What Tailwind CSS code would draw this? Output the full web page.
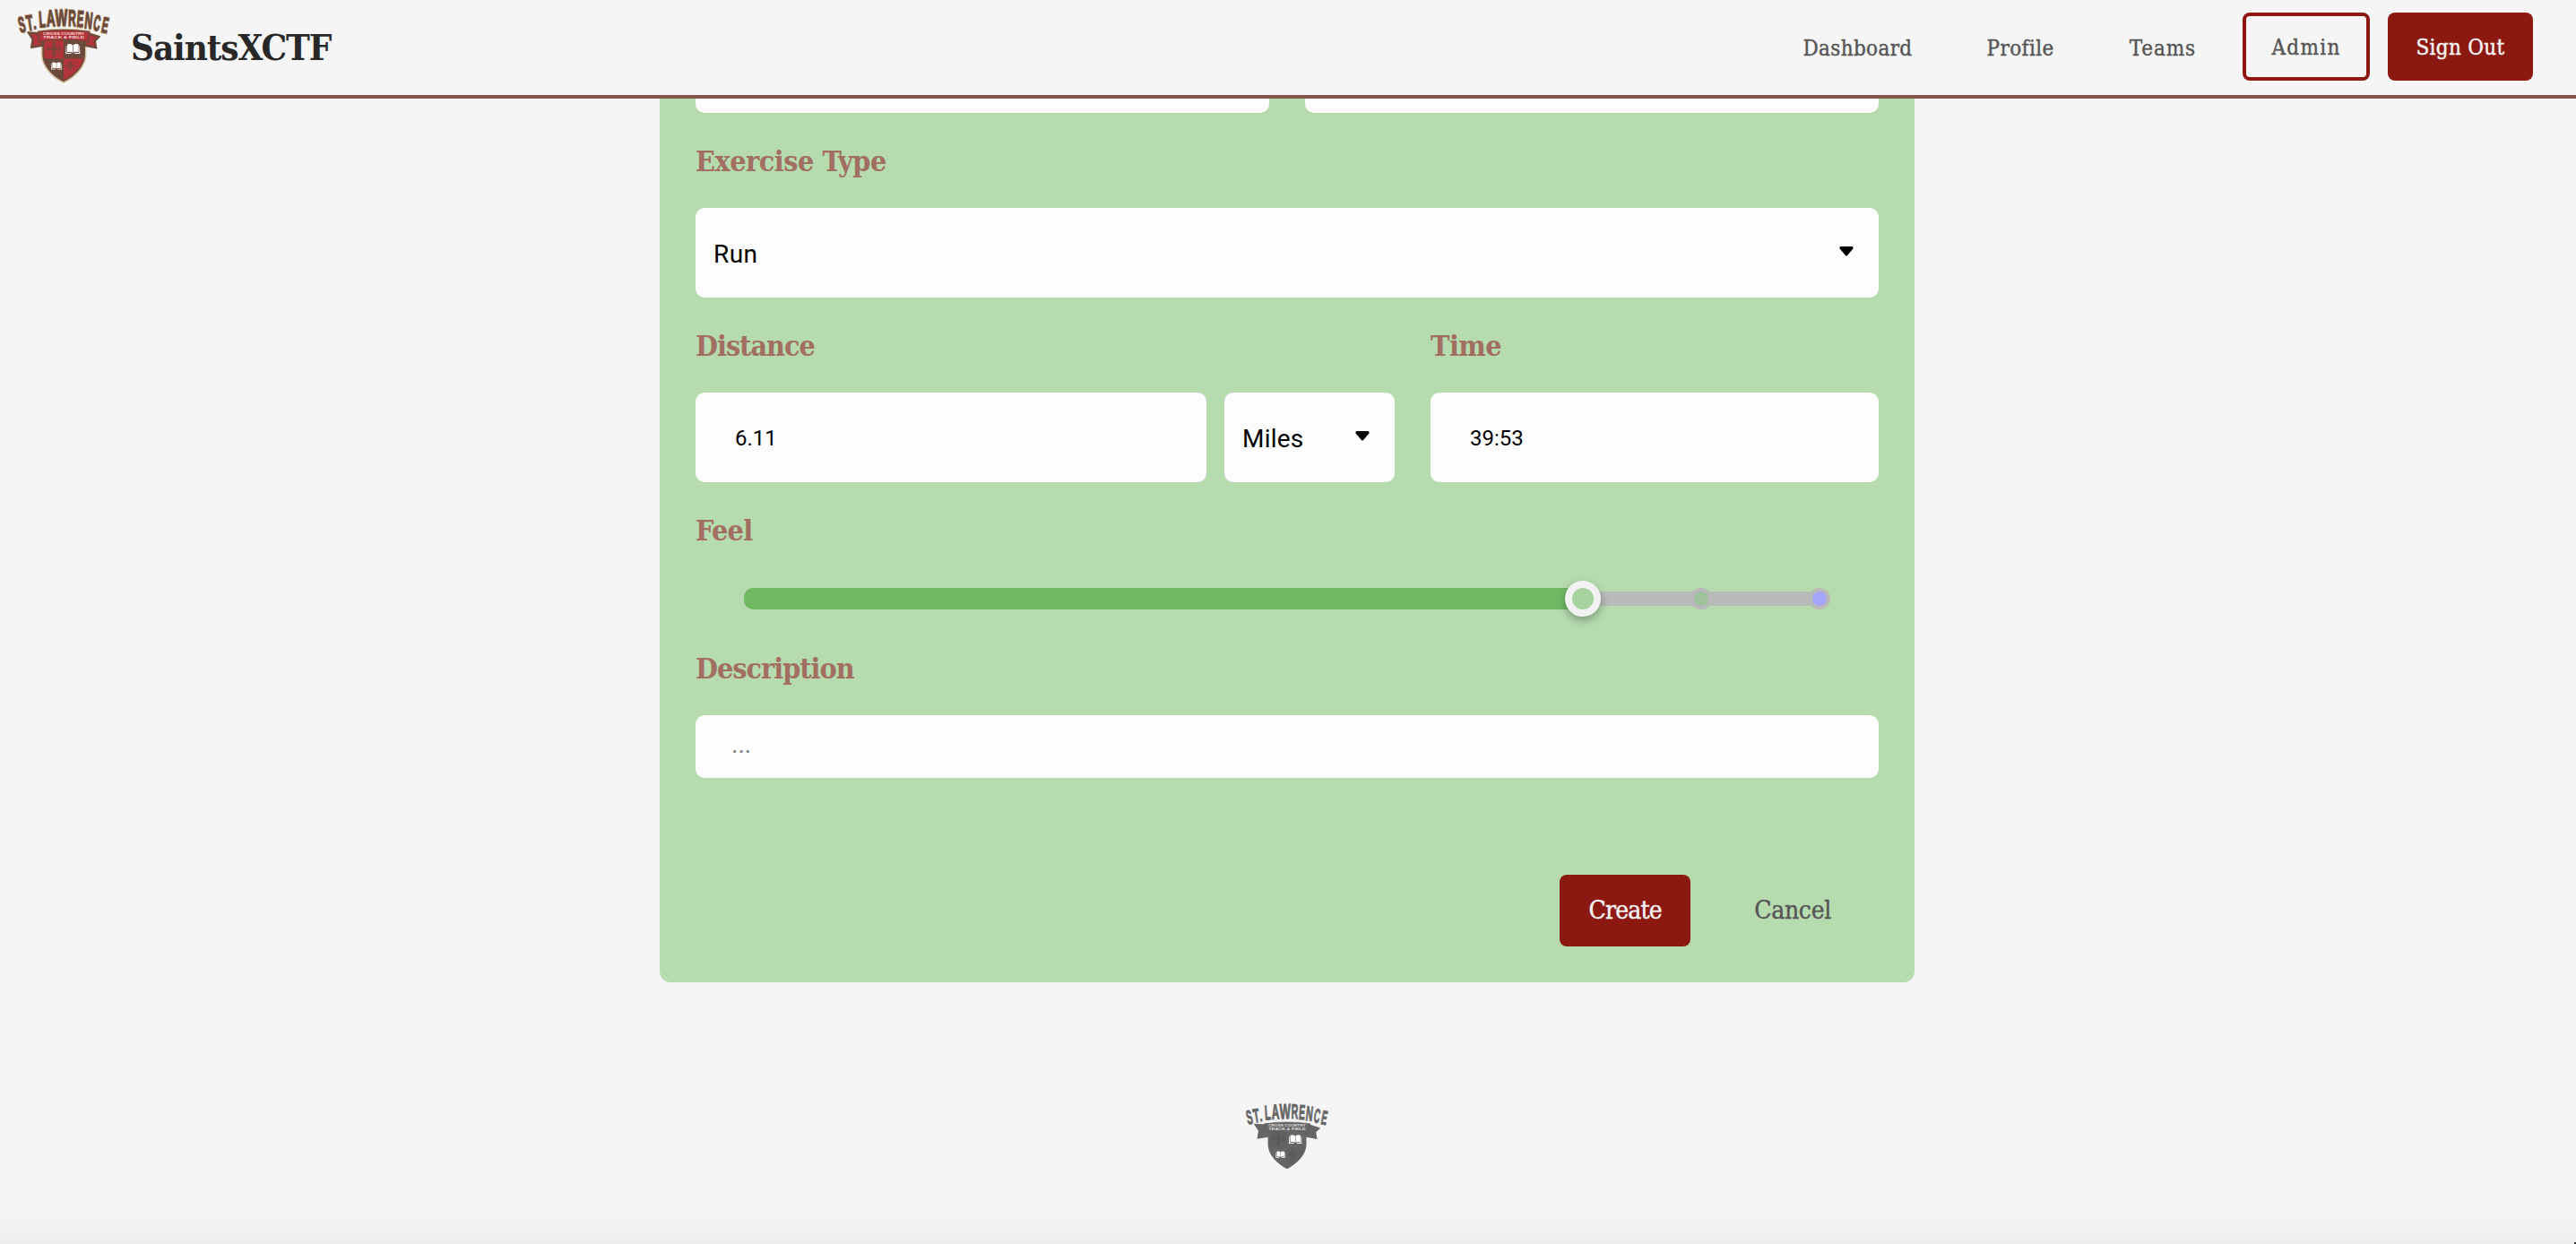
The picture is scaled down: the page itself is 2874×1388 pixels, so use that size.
<!DOCTYPE html>
<html lang="en">
<head>
<meta charset="utf-8">
<title>SaintsXCTF</title>
<script src="https://cdn.jsdelivr.net/npm/@tailwindcss/browser@4"></script>
</head>
<body class="bg-[#f5f5f5]">
<svg class="hidden">
  <defs>
    <g id="wordmark" font-family="Liberation Sans" font-weight="bold" font-size="70" text-anchor="middle">
      <text transform="translate(48 107) rotate(-12) scale(.47 1.05)">S</text>
      <text transform="translate(73 102) rotate(-9) scale(.52 1.05)">T</text>
      <text transform="translate(88 97) rotate(-6) scale(.55 .8)">.</text>
      <text transform="translate(113 91) rotate(-4) scale(.52 1.08)">L</text>
      <text transform="translate(141 88) rotate(-3) scale(.57 1.1)">A</text>
      <text transform="translate(176 87) rotate(-1) scale(.62 1.12)">W</text>
      <text transform="translate(211 87) rotate(1) scale(.51 1.1)">R</text>
      <text transform="translate(237 90) rotate(4) scale(.48 1.1)">E</text>
      <text transform="translate(264 95) rotate(6) scale(.51 1.1)">N</text>
      <text transform="translate(291 102) rotate(9) scale(.44 1.05)">C</text>
      <text transform="translate(317 109) rotate(11) scale(.46 1.05)">E</text>
    </g>
    <path id="shield" d="M112 132 H255 V186 C253 222 220 256 183 274 C146 256 114 222 112 186 Z"/>
    <path id="tails" d="M102 112 L66 110 L80 131 L76 158 L113 152 Z M265 112 L301 123 L287 137 L291 159 L254 152 Z"/>
    <path id="band" d="M98 106 Q183 94 269 106 L266 140 Q183 125 101 140 Z"/>
    <path id="cross" d="M-22 -3 h19 v-19 h6 v19 h19 v6 h-19 v19 h-6 v-19 h-19 Z M-7 -20 h14 l-7 -6 Z M-7 20 h14 l-7 6 Z M-20 -7 v14 l-6 -7 Z M20 -7 v14 l6 -7 Z M-7 -15 h14 v4 h-14 Z M-7 11 h14 v4 h-14 Z M-15 -7 v14 h4 v-14 Z M11 -7 v14 h4 v-14 Z"/>
    <path id="book" d="M-1 -12 C-8 -17 -15 -16 -19 -14 V12 C-14 9 -7 10 -1 13 Z M1 -12 C8 -17 15 -16 19 -14 V12 C14 9 7 10 1 13 Z M-23 -9 h2 V14 H-6 V17 H-24 Z M23 -9 h-2 V14 H6 V17 H24 Z"/>
    <g id="motto" font-family="Liberation Sans" font-weight="bold" font-size="12" text-anchor="middle">
      <text x="183" y="117" textLength="138" lengthAdjust="spacingAndGlyphs">CROSS COUNTRY</text>
      <text x="183" y="129" textLength="138" lengthAdjust="spacingAndGlyphs">TRACK &amp; FIELD</text>
    </g>
  </defs>
</svg>

<div class="relative flex h-[1388px] flex-col overflow-hidden bg-[linear-gradient(to_bottom,#f5f5f5_1346px,#eeeeee_1388px)] font-['Roboto']">
  <header class="flex h-[110px] shrink-0 items-start justify-between border-b-4 border-[#85554b] bg-[#f5f5f5] pr-12 pl-[10px] font-['DejaVu_Serif_Condensed','DejaVu_Serif',serif]">
    <div class="flex">
      <svg class="h-[100px] w-[120px]" viewBox="0 0 360 300">
        <g fill="#d9c3a0" stroke="#d9c3a0" stroke-width="9" stroke-linejoin="round">
          <use href="#wordmark" stroke-width="8"/><use href="#tails"/><use href="#band"/><use href="#shield"/>
        </g>
        <use href="#wordmark" fill="#6b4a3c" stroke="#6b4a3c" stroke-width="3"/>
        <use href="#shield" fill="#6b4a3c"/>
        <path fill="#b3333a" d="M118 136 H183 V196 H119 L118 186 Z M183 196 H249 C243 226 216 250 183 268 Z"/>
        <use href="#tails" fill="#b3333a" stroke="#6b4a3c" stroke-width="7"/>
        <use href="#band" fill="#b3333a" stroke="#6b4a3c" stroke-width="4"/>
        <use href="#motto" fill="#f3d9d6"/>
        <use href="#cross" fill="#6b4a3c" transform="translate(151 164)"/>
        <use href="#cross" fill="#6b4a3c" transform="translate(205 221) scale(.68)"/>
        <use href="#book" fill="#fff" transform="translate(214 163)"/>
        <use href="#book" fill="#fff" transform="translate(159 220) scale(.74)"/>
      </svg>
      <span class="ml-4 pt-[29px] text-[40px] leading-[48px] font-bold tracking-[-1.1px] text-[#282828]">SaintsXCTF</span>
    </div>
    <nav class="flex pt-[14px] text-2xl leading-[76px] text-[#555] [-webkit-text-stroke:0.4px]">
      <a class="mr-[83px] pt-0.5 tracking-[0.35px]">Dashboard</a>
      <a class="mr-[84px] pt-0.5 tracking-[0.4px]">Profile</a>
      <a class="mr-[52px] pt-0.5 tracking-[0.9px]">Teams</a>
      <a class="mr-5 flex h-[76px] w-[142px] items-center justify-center rounded-lg border-4 border-[#8c1911] pt-0.5 tracking-[1.3px]">Admin</a>
      <a class="flex h-[76px] w-[162px] items-center justify-center rounded-lg bg-[#8c1911] pt-0.5 tracking-[0.3px] text-[#f5f5f5]">Sign Out</a>
    </nav>
  </header>

  <main class="mx-auto flex h-[986px] w-[1400px] shrink-0 -translate-x-px flex-col rounded-b-xl bg-[#b5dbaf] px-10">
    <div class="grid h-4 shrink-0 grid-cols-2 gap-10">
      <div class="rounded-b-[10px] bg-[#fdfdfd]"></div>
      <div class="rounded-b-[10px] bg-[#fdfdfd]"></div>
    </div>

    <label class="h-[106px] shrink-0 pt-px font-['DejaVu_Serif_Condensed','DejaVu_Serif',serif] text-[32px] leading-[106px] font-bold tracking-[-0.45px] text-[#a26e61]">Exercise Type</label>
    <div class="flex h-[100px] shrink-0 items-center justify-between rounded-[10px] bg-[#fdfdfd] pr-7 pl-5 text-black">
      <span class="pt-1 text-[28px] tracking-[0.4px]">Run</span>
      <svg class="mb-1 h-3 w-4" viewBox="0 0 16 12"><path d="M1.5 1h13q2 1 .5 3L9 11q-1 1-2 0L1 4Q-.5 2 1.5 1z"/></svg>
    </div>

    <div class="grid shrink-0 grid-cols-[780px_500px] gap-x-10">
      <label class="h-[106px] pt-px font-['DejaVu_Serif_Condensed','DejaVu_Serif',serif] text-[32px] leading-[106px] font-bold tracking-[-1px] text-[#a26e61]">Distance</label>
      <label class="h-[106px] pt-px font-['DejaVu_Serif_Condensed','DejaVu_Serif',serif] text-[32px] leading-[106px] font-bold tracking-[-0.5px] text-[#a26e61]">Time</label>
      <div class="flex gap-5">
        <div class="flex h-[100px] w-[570px] items-center rounded-[10px] bg-[#fdfdfd] pt-0.5 pl-11 text-2xl text-black">6.11</div>
        <div class="flex h-[100px] w-[190px] items-center justify-between rounded-[10px] bg-[#fdfdfd] pr-7 pl-5 text-black">
          <span class="pt-1 text-[28px] tracking-[0.2px]">Miles</span>
          <svg class="mb-1 h-3 w-4" viewBox="0 0 16 12"><path d="M1.5 1h13q2 1 .5 3L9 11q-1 1-2 0L1 4Q-.5 2 1.5 1z"/></svg>
        </div>
      </div>
      <div class="flex h-[100px] items-center rounded-[10px] bg-[#fdfdfd] pt-0.5 pl-11 text-2xl text-black">39:53</div>
    </div>

    <label class="h-[106px] shrink-0 pt-px font-['DejaVu_Serif_Condensed','DejaVu_Serif',serif] text-[32px] leading-[106px] font-bold tracking-[-0.7px] text-[#a26e61]">Feel</label>
    <div class="relative mr-[54px] ml-[54px] flex h-12 shrink-0 items-center">
      <div class="h-6 w-[936px] rounded-l-[10px] bg-[#70b963]"></div>
      <div class="h-4 w-[264px] bg-[#b9b9b9]"></div>
      <div class="absolute top-3 left-[1056px] size-6 rounded-full border-4 border-[#b9b9b9] bg-[#9fc19b]"></div>
      <div class="absolute top-3 left-[1188px] size-6 rounded-full border-4 border-[#b9b9b9] bg-[#a5a5fb]"></div>
      <div class="absolute top-1 left-[916px] size-10 rounded-full border-8 border-[#f2f2f2] bg-[#a6d39e] shadow-[0_4px_10px_rgba(0,0,0,0.3)]"></div>
    </div>

    <label class="h-[106px] shrink-0 pt-px font-['DejaVu_Serif_Condensed','DejaVu_Serif',serif] text-[32px] leading-[106px] font-bold tracking-[-1px] text-[#a26e61]">Description</label>
    <div class="h-[70px] shrink-0 rounded-[10px] bg-[#fdfdfd] pl-10 text-[28px] leading-[65px] text-[#757575]">...</div>

    <div class="mt-[108px] flex h-20 shrink-0 items-center justify-end font-['DejaVu_Serif_Condensed','DejaVu_Serif',serif] text-[28px] [-webkit-text-stroke:0.4px]">
      <button class="flex h-20 w-[146px] items-center justify-center rounded-lg bg-[#8c1911] tracking-[-0.8px] text-[#f5f5f5]">Create</button>
      <button class="mr-[53px] ml-[71px] tracking-[-0.3px] text-[#555]">Cancel</button>
    </div>
  </main>

  <footer class="flex shrink-0 justify-center pt-[126px]">
    <svg class="h-[90px] w-[108px] -translate-x-0.5" viewBox="0 0 360 300">
      <g fill="#666">
        <use href="#wordmark" stroke="#666" stroke-width="3"/><use href="#shield"/>
        <path fill="#616161" d="M118 136 H183 V196 H119 Z M183 196 H249 C243 226 216 250 183 268 Z"/>
        <use href="#tails" stroke="#666" stroke-width="7"/><use href="#band" stroke="#5c5c5c" stroke-width="2"/>
      </g>
      <use href="#motto" fill="#ddd"/>
      <use href="#cross" fill="#575757" transform="translate(151 164)"/>
      <use href="#cross" fill="#575757" transform="translate(205 221) scale(.68)"/>
      <use href="#book" fill="#fff" transform="translate(214 163)"/>
      <use href="#book" fill="#fff" transform="translate(159 220) scale(.74)"/>
    </svg>
  </footer>
  <div class="absolute right-0 bottom-0 size-0.5 bg-[#333]"></div>
</div>
</body>
</html>
